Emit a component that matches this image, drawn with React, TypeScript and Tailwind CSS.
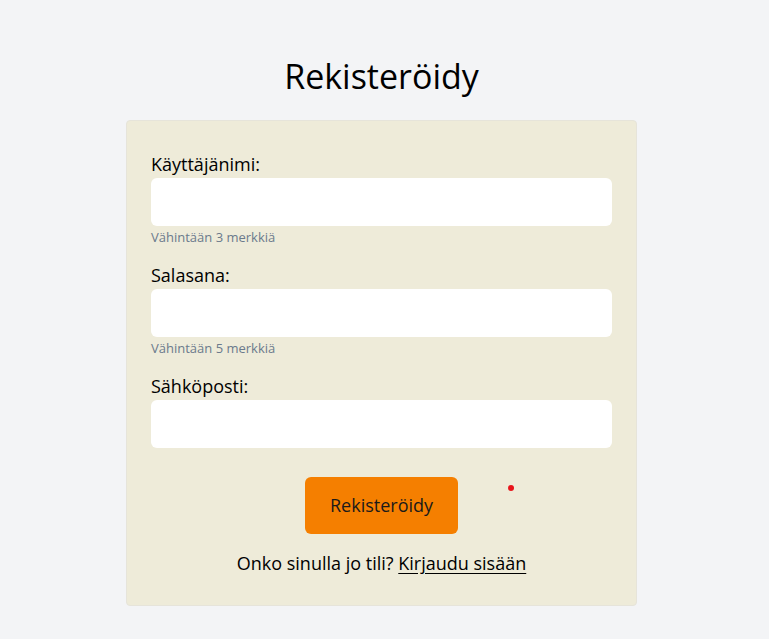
export default function App() {
  return (
    <main className="min-h-screen w-full bg-[#f3f4f6] font-['Open_Sans',sans-serif] text-black">
      <div className="flex flex-col items-center pt-[53px] pr-[6px]">
        <h1 className="text-[34px] leading-[47px] mb-[20px]">Rekisteröidy</h1>

        <form className="w-[511px] rounded-[4px] border border-[#e6e4da] bg-[#eeebd9] px-[24px] pt-[30px] pb-[28px]">
          <Field label="Käyttäjänimi:" hint="Vähintään 3 merkkiä" />
          <Field label="Salasana:" hint="Vähintään 5 merkkiä" type="password" />
          <Field label="Sähköposti:" type="email" />

          <div className="relative mt-[29px] flex justify-center">
            <button
              type="button"
              className="h-[57px] w-[153px] rounded-[6px] bg-[#f57f00] text-[18px] text-[#1a1a1a]"
            >
              Rekisteröidy
            </button>
            <span className="absolute left-[357px] top-[8px] h-[6px] w-[6px] rounded-full bg-[#e8141b]" />
          </div>

          <p className="mt-[15px] text-center text-[18px] leading-[28px]">
            Onko sinulla jo tili?{" "}
            <a href="#" className="underline underline-offset-[3px]">
              Kirjaudu sisään
            </a>
          </p>
        </form>
      </div>
    </main>
  );
}

function Field({
  label,
  hint,
  type = "text",
}: {
  label: string;
  hint?: string;
  type?: string;
}) {
  return (
    <div className="mb-[14px] last:mb-0">
      <label className="block text-[18px] leading-[27px]">{label}</label>
      <input
        type={type}
        className="block h-[48px] w-full rounded-[6px] bg-white px-3 outline-none"
      />
      {hint && (
        <p className="mt-[2px] pb-[2px] text-[13px] leading-[18px] text-[#6b7a8c]">
          {hint}
        </p>
      )}
    </div>
  );
}
